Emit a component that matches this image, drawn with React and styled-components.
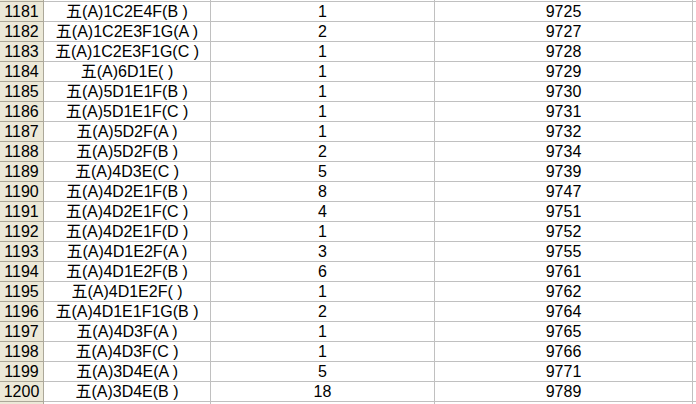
import React from "react";
import styled, { createGlobalStyle } from "styled-components";

const Global = createGlobalStyle`
  html, body { margin: 0; padding: 0; background: #fff; overflow: hidden; }
  body { font-family: "Liberation Sans", Arial, "Noto Sans CJK SC", sans-serif; }
`;

const Sheet = styled.div`
  width: 696px;
  height: 404px;
  overflow: hidden;
  display: flex;
  flex-direction: column;
`;

const Row = styled.div`
  display: grid;
  grid-template-columns: 44px 167px 224px 258px 1fr;
  height: ${(p) => p.$h}px;
  flex: none;
  box-sizing: border-box;
`;

const HeadCell = styled.div`
  box-sizing: border-box;
  background: #ece9d8;
  border-right: 1px solid #aca899;
  border-top: ${(p) => (p.$edge ? "1px solid #aca899" : "none")};
  color: #000;
  font-size: 16px;
  line-height: 19px;
  text-align: center;
  overflow: hidden;
`;

const Cell = styled.div`
  box-sizing: border-box;
  border-right: ${(p) => (p.$last ? "none" : "1px solid #c0c0c0")};
  border-top: ${(p) => (p.$edge ? "1px solid #c0c0c0" : "none")};
  color: #000;
  font-size: 16px;
  line-height: 19px;
  text-align: center;
  white-space: nowrap;
  overflow: hidden;
`;

const data = [
  [1181, "五(A)1C2E4F(B )", 1, 9725],
  [1182, "五(A)1C2E3F1G(A )", 2, 9727],
  [1183, "五(A)1C2E3F1G(C )", 1, 9728],
  [1184, "五(A)6D1E( )", 1, 9729],
  [1185, "五(A)5D1E1F(B )", 1, 9730],
  [1186, "五(A)5D1E1F(C )", 1, 9731],
  [1187, "五(A)5D2F(A )", 1, 9732],
  [1188, "五(A)5D2F(B )", 2, 9734],
  [1189, "五(A)4D3E(C )", 5, 9739],
  [1190, "五(A)4D2E1F(B )", 8, 9747],
  [1191, "五(A)4D2E1F(C )", 4, 9751],
  [1192, "五(A)4D2E1F(D )", 1, 9752],
  [1193, "五(A)4D1E2F(A )", 3, 9755],
  [1194, "五(A)4D1E2F(B )", 6, 9761],
  [1195, "五(A)4D1E2F( )", 1, 9762],
  [1196, "五(A)4D1E1F1G(B )", 2, 9764],
  [1197, "五(A)4D3F(A )", 1, 9765],
  [1198, "五(A)4D3F(C )", 1, 9766],
  [1199, "五(A)3D4E(A )", 5, 9771],
  [1200, "五(A)3D4E(B )", 18, 9789],
];

const Blank = ({ h, edge }) => (
  <Row $h={h}>
    <HeadCell $edge={edge} />
    <Cell $edge={edge} />
    <Cell $edge={edge} />
    <Cell $edge={edge} />
    <Cell $edge={edge} $last />
  </Row>
);

export default function App() {
  return (
    <>
      <Global />
      <Sheet>
        <Blank h={1} />
        {data.map(([n, a, b, c]) => (
          <Row key={n} $h={20}>
            <HeadCell $edge>{n}</HeadCell>
            <Cell $edge>{a}</Cell>
            <Cell $edge>{b}</Cell>
            <Cell $edge>{c}</Cell>
            <Cell $edge $last />
          </Row>
        ))}
        <Blank h={3} edge />
      </Sheet>
    </>
  );
}
